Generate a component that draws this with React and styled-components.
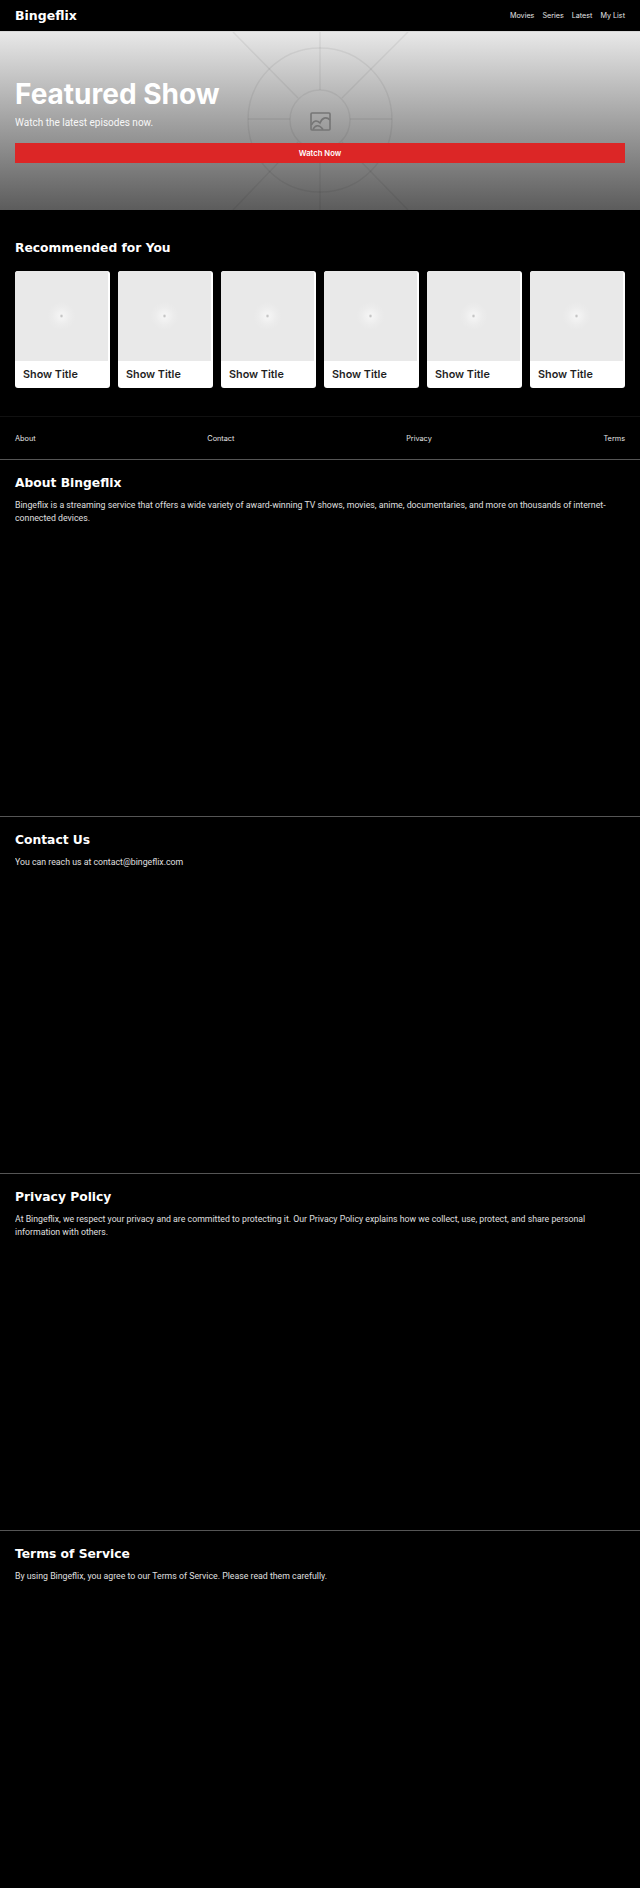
import React from "react";
import styled, { createGlobalStyle } from "styled-components";

const GlobalStyle = createGlobalStyle`
  html, body {
    margin: 0;
    padding: 0;
    background: #000;
  }
  * {
    box-sizing: border-box;
  }
  body {
    font-family: "Inter", "Liberation Sans", sans-serif;
    color: #fff;
  }
`;

const wideFont = `"DejaVu Sans", "Liberation Sans", sans-serif`;
const bodyFont = `"Roboto", "Liberation Sans", sans-serif`;

const shows = [1, 2, 3, 4, 5, 6];

const sections = [
  {
    title: "About Bingeflix",
    text: "Bingeflix is a streaming service that offers a wide variety of award-winning TV shows, movies, anime, documentaries, and more on thousands of internet-connected devices.",
  },
  {
    title: "Contact Us",
    text: "You can reach us at contact@bingeflix.com",
  },
  {
    title: "Privacy Policy",
    text: "At Bingeflix, we respect your privacy and are committed to protecting it. Our Privacy Policy explains how we collect, use, protect, and share personal information with others.",
  },
  {
    title: "Terms of Service",
    text: "By using Bingeflix, you agree to our Terms of Service. Please read them carefully.",
  },
];

const HeroArt = () => (
  <HeroSvg viewBox="0 0 640 178" preserveAspectRatio="none">
    <g fill="none" stroke="#000" strokeOpacity="0.06" strokeWidth="1.5">
      <circle cx="320" cy="88" r="72" />
      <circle cx="320" cy="88" r="30" />
      <path d="M320 0V58M320 118V178M248 87H290M350 87H392" />
      <path d="M233 0L298 66M408 0L342 66M298 110L233 178M342 110L408 178" />
    </g>
    <g fill="none" stroke="#757575" strokeWidth="1.6">
      <rect x="311" y="81" width="19" height="17" rx="1" />
      <path d="M311.5 93C314 88 317 88 320 91C322 86 326 84 330 88" />
      <path d="M313 97.5C315 93 319 92 323 97.5" />
    </g>
  </HeroSvg>
);

const App = () => {
  return (
    <Page>
      <GlobalStyle />
      <Navbar>
        <Logo>Bingeflix</Logo>
        <NavLinks>
          <a>Movies</a>
          <a>Series</a>
          <a>Latest</a>
          <a>My List</a>
        </NavLinks>
      </Navbar>
      <Hero>
        <HeroArt />
        <HeroTitle>Featured Show</HeroTitle>
        <HeroText>Watch the latest episodes now.</HeroText>
        <WatchButton>Watch Now</WatchButton>
      </Hero>
      <Recommended>
        <RecommendedTitle>Recommended for You</RecommendedTitle>
        <CardRow>
          {shows.map((id) => (
            <Card key={id}>
              <Thumb />
              <CardTitle>Show Title</CardTitle>
            </Card>
          ))}
        </CardRow>
      </Recommended>
      <FooterLinks>
        <a>About</a>
        <a>Contact</a>
        <a>Privacy</a>
        <a>Terms</a>
      </FooterLinks>
      {sections.map((item) => (
        <InfoSection key={item.title}>
          <InfoTitle>{item.title}</InfoTitle>
          <InfoText>{item.text}</InfoText>
        </InfoSection>
      ))}
    </Page>
  );
};

const Page = styled.div`
  width: 640px;
  background: #000;
`;

const Navbar = styled.nav`
  height: 32px;
  padding: 0 15px;
  display: flex;
  align-items: center;
  justify-content: space-between;
  background: #000;
  border-bottom: 1px solid #d8d8d8;
`;

const Logo = styled.div`
  font-family: ${wideFont};
  font-size: 12.5px;
  font-weight: 700;
`;

const NavLinks = styled.div`
  display: flex;
  gap: 8px;
  font-size: 7.2px;
  color: #e4e4e4;
`;

const Hero = styled.section`
  position: relative;
  height: 178px;
  padding: 45px 15px 0;
  background: linear-gradient(180deg, #e8e8e8 0%, #5c5c5c 100%);
  overflow: hidden;
`;

const HeroSvg = styled.svg`
  position: absolute;
  left: 0;
  top: 0;
  width: 100%;
  height: 100%;
`;

const HeroTitle = styled.h1`
  position: relative;
  margin: 0;
  font-size: 28px;
  line-height: 34px;
  font-weight: 700;
  color: #fff;
`;

const HeroText = styled.p`
  position: relative;
  margin: 5px 0 0;
  font-family: ${bodyFont};
  font-size: 10px;
  line-height: 14px;
  color: #fff;
  opacity: 0.92;
`;

const WatchButton = styled.button`
  position: relative;
  display: block;
  width: 100%;
  height: 20px;
  margin-top: 13px;
  padding: 0;
  border: none;
  background: #dc2626;
  color: #fff;
  font-family: inherit;
  font-size: 7.7px;
  font-weight: 600;
`;

const Recommended = styled.section`
  height: 207px;
  padding: 30px 15px 0;
  border-bottom: 1px solid #111;
`;

const RecommendedTitle = styled.h2`
  margin: 0 0 15px;
  font-family: ${wideFont};
  font-size: 12.3px;
  line-height: 16px;
  font-weight: 700;
`;

const CardRow = styled.div`
  display: grid;
  grid-template-columns: repeat(6, 1fr);
  gap: 8px;
`;

const Card = styled.div`
  height: 117px;
  background: #fff;
  border-radius: 3px;
  overflow: hidden;
  display: flex;
  flex-direction: column;
`;

const Thumb = styled.div`
  height: 90px;
  margin-right: 2px;
  background: radial-gradient(circle at 50% 50%, #b5b5b5 0, #f4f4f4 2px, #ececec 9px, #e9e9e9 14px);
`;

const CardTitle = styled.div`
  padding: 6px 8px 0;
  font-size: 10.8px;
  line-height: 16px;
  font-weight: 600;
  color: #1f1f1f;
`;

const FooterLinks = styled.div`
  height: 42px;
  padding: 0 15px;
  display: flex;
  align-items: center;
  justify-content: space-between;
  font-size: 7.3px;
  color: #e4e4e4;
`;

const InfoSection = styled.section`
  height: 357px;
  padding: 14px 15px 0;
  border-top: 1px solid #555;
`;

const InfoTitle = styled.h2`
  margin: 0 0 7px;
  font-family: ${wideFont};
  font-size: 12.3px;
  line-height: 18px;
  font-weight: 700;
`;

const InfoText = styled.p`
  margin: 0;
  font-family: ${bodyFont};
  font-size: 8.76px;
  line-height: 13px;
  color: #fff;
  opacity: 0.87;
`;

export default App;
